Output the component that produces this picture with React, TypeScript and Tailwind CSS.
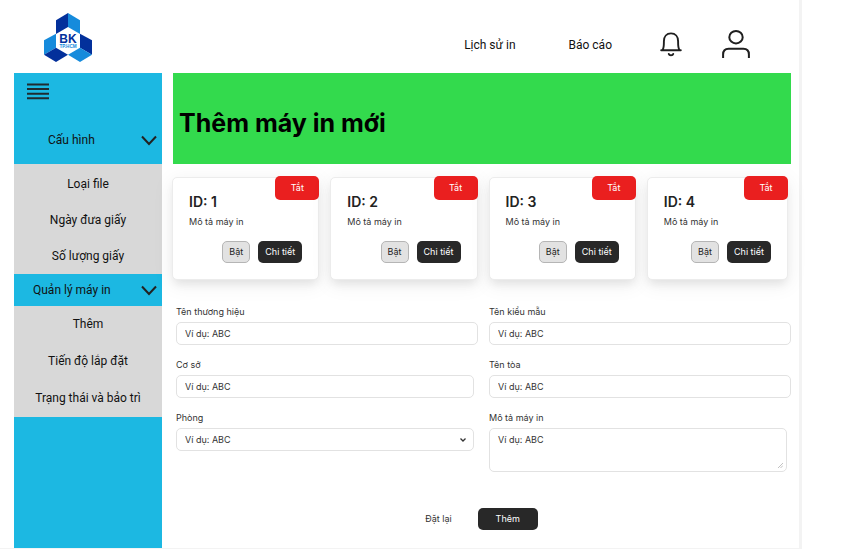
import type { ReactNode } from "react";

const controlClass =
  "block w-full rounded-[5px] border border-[#e2e2e2] bg-white px-2 text-[9px] leading-3 text-[#333] placeholder:text-[#333] placeholder:opacity-100 outline-none focus:border-[#999]";

function Logo() {
  return (
    <svg viewBox="132 38 144 147" className="h-[49px] w-12" role="img" aria-label="BK TP.HCM">
      <path d="M204 38 168 60V101L204 80Z" fill="#03309b" />
      <path d="M204 38 240 60V101L204 80Z" fill="#168bdc" />
      <path d="M132 120 168 100V142L132 163Z" fill="#168bdc" />
      <path d="M132 163 168 142 204 163 168 185Z" fill="#03309b" />
      <path d="M276 120 240 100V142L276 163Z" fill="#03309b" />
      <path d="M276 163 240 142 204 163 240 185Z" fill="#168bdc" />
      <text x="204" y="127" textAnchor="middle" fontSize="36" fontWeight="700" fill="#03309b" fontFamily="Liberation Sans, sans-serif">
        BK
      </text>
      <text x="204" y="143" textAnchor="middle" fontSize="14" fontWeight="700" fill="#168bdc" fontFamily="Liberation Sans, sans-serif">
        TP.HCM
      </text>
    </svg>
  );
}

function BellIcon() {
  return (
    <svg viewBox="0 0 22 25" className="h-[25px] w-[22px]" fill="none" stroke="#1f1f1f" strokeWidth="1.9" strokeLinecap="round" strokeLinejoin="round">
      <path d="M1.2 18.3H20.8M2.6 18C4 15.8 3.9 13.5 3.9 9.2 3.9 4.6 6.6 1.4 11 1.4s7.1 3.2 7.1 7.8c0 4.3-.1 6.6 1.3 8.8" />
      <path d="M8.8 22c.5 1.6 3.9 1.6 4.4 0" strokeWidth="2" />
    </svg>
  );
}

function UserIcon() {
  return (
    <svg viewBox="0 0 28 29" className="h-[29px] w-7" fill="none" stroke="#1f1f1f" strokeWidth="2" strokeLinecap="butt">
      <ellipse cx="14" cy="7.2" rx="6.7" ry="6.2" />
      <path d="M1.1 28V24.5C1.1 20.8 3.2 18.8 6.6 18.8H21.4C24.8 18.8 26.9 20.8 26.9 24.5V28" />
    </svg>
  );
}

function Chevron() {
  return (
    <svg viewBox="0 0 16 11" className="h-[11px] w-4" fill="none" stroke="#222" strokeWidth="2">
      <path d="M1 1.5 8 9 15 1.5" />
    </svg>
  );
}

function SubMenu({ items, className }: { items: string[]; className: string }) {
  return (
    <ul className={`flex flex-col items-center bg-[#d8d8d8] leading-5 ${className}`}>
      {items.map((item) => (
        <li key={item}>
          <a href="#">{item}</a>
        </li>
      ))}
    </ul>
  );
}

function PrinterCard({ id }: { id: number }) {
  return (
    <article className="relative rounded-[5px] border border-[#ececec] bg-white px-4 pt-4 pb-4 text-[9px] leading-3 text-[#333] shadow-[0_6px_8px_-2px_rgba(0,0,0,0.08),0_4px_20px_2px_rgba(0,0,0,0.06)]">
      <button type="button" className="absolute -top-0.5 -right-px h-6 w-11 rounded-[5px] bg-[#ea1f1f] text-white">
        Tắt
      </button>
      <h2 className="text-sm leading-4 font-semibold text-[#222]">ID: {id}</h2>
      <p className="mt-1.5">Mô tả máy in</p>
      <div className="mt-[13px] flex justify-end gap-2">
        <button type="button" className="h-[22px] w-7 rounded-[5px] border border-[#b5b5b5] bg-[#e2e2e2] text-[#222]">
          Bật
        </button>
        <button type="button" className="h-[22px] w-11 rounded-[5px] bg-[#282828] text-white">
          Chi tiết
        </button>
      </div>
    </article>
  );
}

function Field({ id, label, className = "", children }: { id: string; label: string; className?: string; children: ReactNode }) {
  return (
    <div className={className}>
      <label htmlFor={id} className="mb-1 block">
        {label}
      </label>
      {children}
    </div>
  );
}

export default function App() {
  return (
    <div className="mr-[63px] border-r-[3px] border-b border-[#f3f3f3] bg-white font-['Roboto',sans-serif] text-xs text-[#111]">
      <header className="flex h-[73px] items-center justify-between pt-0.5 pr-[49px] pl-11">
        <a href="#">
          <Logo />
        </a>
        <nav className="flex items-center pt-3.5">
          <a href="#" className="mr-[53px]">Lịch sử in</a>
          <a href="#" className="mr-12">Báo cáo</a>
          <button type="button" aria-label="Thông báo" className="mr-10">
            <BellIcon />
          </button>
          <button type="button" aria-label="Tài khoản">
            <UserIcon />
          </button>
        </nav>
      </header>

      <div className="flex gap-[11px] pr-2 pl-3.5">
        <aside className="w-[148px] shrink-0 bg-[#1cb8e2]">
          <div className="flex h-[91px] flex-col justify-between pt-2.5 pb-3.5">
            <button type="button" aria-label="Menu" className="ml-[13px] self-start">
              <svg viewBox="0 0 22 17" className="h-[17px] w-[22px]" stroke="#1f2b30" strokeWidth="2">
                <path d="M0 1.5H22M0 6H22M0 10.7H22M0 15.2H22" />
              </svg>
            </button>
            <button type="button" className="flex items-center justify-between pr-[5px] pl-[34px] leading-5">
              Cấu hình
              <Chevron />
            </button>
          </div>
          <SubMenu items={["Loại file", "Ngày đưa giấy", "Số lượng giấy"]} className="gap-4 pt-2.5 pb-2" />
          <button type="button" className="flex h-8 w-full items-center justify-between pr-[5px] pl-[19px] leading-5">
            Quản lý máy in
            <Chevron />
          </button>
          <SubMenu items={["Thêm", "Tiến độ lắp đặt", "Trạng thái và bảo trì"]} className="gap-[17px] pt-2 pb-[9px]" />
        </aside>

        <main className="min-w-0 flex-1 font-['Inter',sans-serif] text-[9px] leading-3 text-[#333]">
          <h1 className="bg-[#33da4d] px-1.5 pt-[34px] pb-[25px] text-[25px] leading-8 font-bold text-black">Thêm máy in mới</h1>

          <section className="mt-[13px] -ml-px grid grid-cols-[147fr_147fr_147fr_141fr] gap-[11px] pr-[3px]" aria-label="Danh sách máy in">
            {[1, 2, 3, 4].map((id) => (
              <PrinterCard key={id} id={id} />
            ))}
          </section>

          <form className="mt-[26px] pb-[18px] pl-[3px]" onSubmit={(event) => event.preventDefault()}>
            <div className="grid grid-cols-2 gap-x-[11px] gap-y-3.5">
              <Field id="brand" label="Tên thương hiệu">
                <input id="brand" placeholder="Ví dụ: ABC" className={`h-[23px] ${controlClass}`} />
              </Field>
              <Field id="model" label="Tên kiểu mẫu">
                <input id="model" placeholder="Ví dụ: ABC" className={`h-[23px] ${controlClass}`} />
              </Field>
              <Field id="campus" label="Cơ sở" className="pr-1">
                <input id="campus" placeholder="Ví dụ: ABC" className={`h-[23px] ${controlClass}`} />
              </Field>
              <Field id="building" label="Tên tòa">
                <input id="building" placeholder="Ví dụ: ABC" className={`h-[23px] ${controlClass}`} />
              </Field>
              <Field id="room" label="Phòng" className="pr-1">
                <div className="relative">
                  <select id="room" className={`h-[23px] appearance-none ${controlClass}`}>
                    <option>Ví dụ: ABC</option>
                  </select>
                  <svg viewBox="0 0 6 4" className="pointer-events-none absolute top-2.5 right-2 h-1 w-1.5" fill="none" stroke="#333" strokeWidth="1.3">
                    <path d="M.5 .5 3 3 5.5 .5" />
                  </svg>
                </div>
              </Field>
              <Field id="description" label="Mô tả máy in" className="pr-1">
                <div className="relative">
                  <textarea id="description" placeholder="Ví dụ: ABC" className={`h-11 resize-none pt-[5px] ${controlClass}`} />
                  <svg viewBox="0 0 5 5" className="pointer-events-none absolute right-1 bottom-1 size-[5px]" stroke="#999" strokeWidth="0.6">
                    <path d="M0 5 5 0M2.5 5 5 2.5" />
                  </svg>
                </div>
              </Field>
            </div>
            <div className="mt-9 flex items-center justify-center gap-[26px] pr-1">
              <button type="reset">Đặt lại</button>
              <button type="submit" className="h-[22px] w-[60px] rounded-[5px] bg-[#282828] text-white">
                Thêm
              </button>
            </div>
          </form>
        </main>
      </div>
    </div>
  );
}
